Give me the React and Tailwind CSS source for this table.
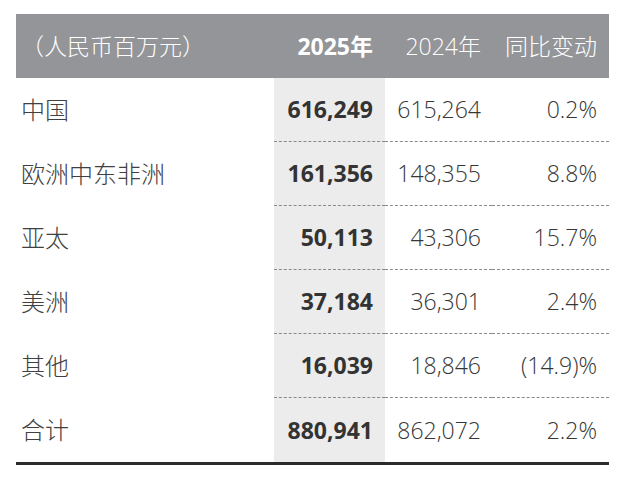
import React from "react";

const rows = [
  { label: "中国", y25: "616,249", y24: "615,264", chg: "0.2%" },
  { label: "欧洲中东非洲", y25: "161,356", y24: "148,355", chg: "8.8%" },
  { label: "亚太", y25: "50,113", y24: "43,306", chg: "15.7%" },
  { label: "美洲", y25: "37,184", y24: "36,301", chg: "2.4%" },
  { label: "其他", y25: "16,039", y24: "18,846", chg: "(14.9)%" },
  { label: "合计", y25: "880,941", y24: "862,072", chg: "2.2%" },
];

export default function App() {
  return (
    <div
      className="w-[626px] h-[484px] bg-white pt-[14px] pl-[16px]"
      style={{ fontFamily: '"Open Sans", "Noto Sans CJK SC", sans-serif' }}
    >
      <div className="w-[593px] border-b-[3px] border-[#2b2b2b]">
        {/* header */}
        <div className="flex h-[64px] bg-[#939598] text-white text-[23px] font-light items-center">
          <div className="w-[258px] pl-[5px]">（人民币百万元）</div>
          <div className="w-[111px] pr-[12px] text-right font-bold">2025年</div>
          <div className="w-[107px] pr-[11px] text-right">2024年</div>
          <div className="w-[117px] pr-[12px] text-right">同比变动</div>
        </div>

        {rows.map((r, i) => {
          const last = i === rows.length - 1;
          const line = last ? "" : "border-b border-dashed border-[#8a8a8a]";
          return (
            <div key={r.label} className="flex h-[64px] text-[23px] text-[#363636]">
              <div className="w-[258px] pl-[5px] flex items-center font-light text-[24px] text-[#404040]">
                {r.label}
              </div>
              <div className={`w-[111px] pr-[12px] flex items-center justify-end bg-[#ececec] font-bold text-[#333] ${line}`}>
                {r.y25}
              </div>
              <div className={`w-[107px] pr-[11px] flex items-center justify-end font-light ${line}`}>
                {r.y24}
              </div>
              <div className={`w-[117px] pr-[12px] flex items-center justify-end font-light ${line}`}>
                {r.chg}
              </div>
            </div>
          );
        })}
      </div>
    </div>
  );
}
